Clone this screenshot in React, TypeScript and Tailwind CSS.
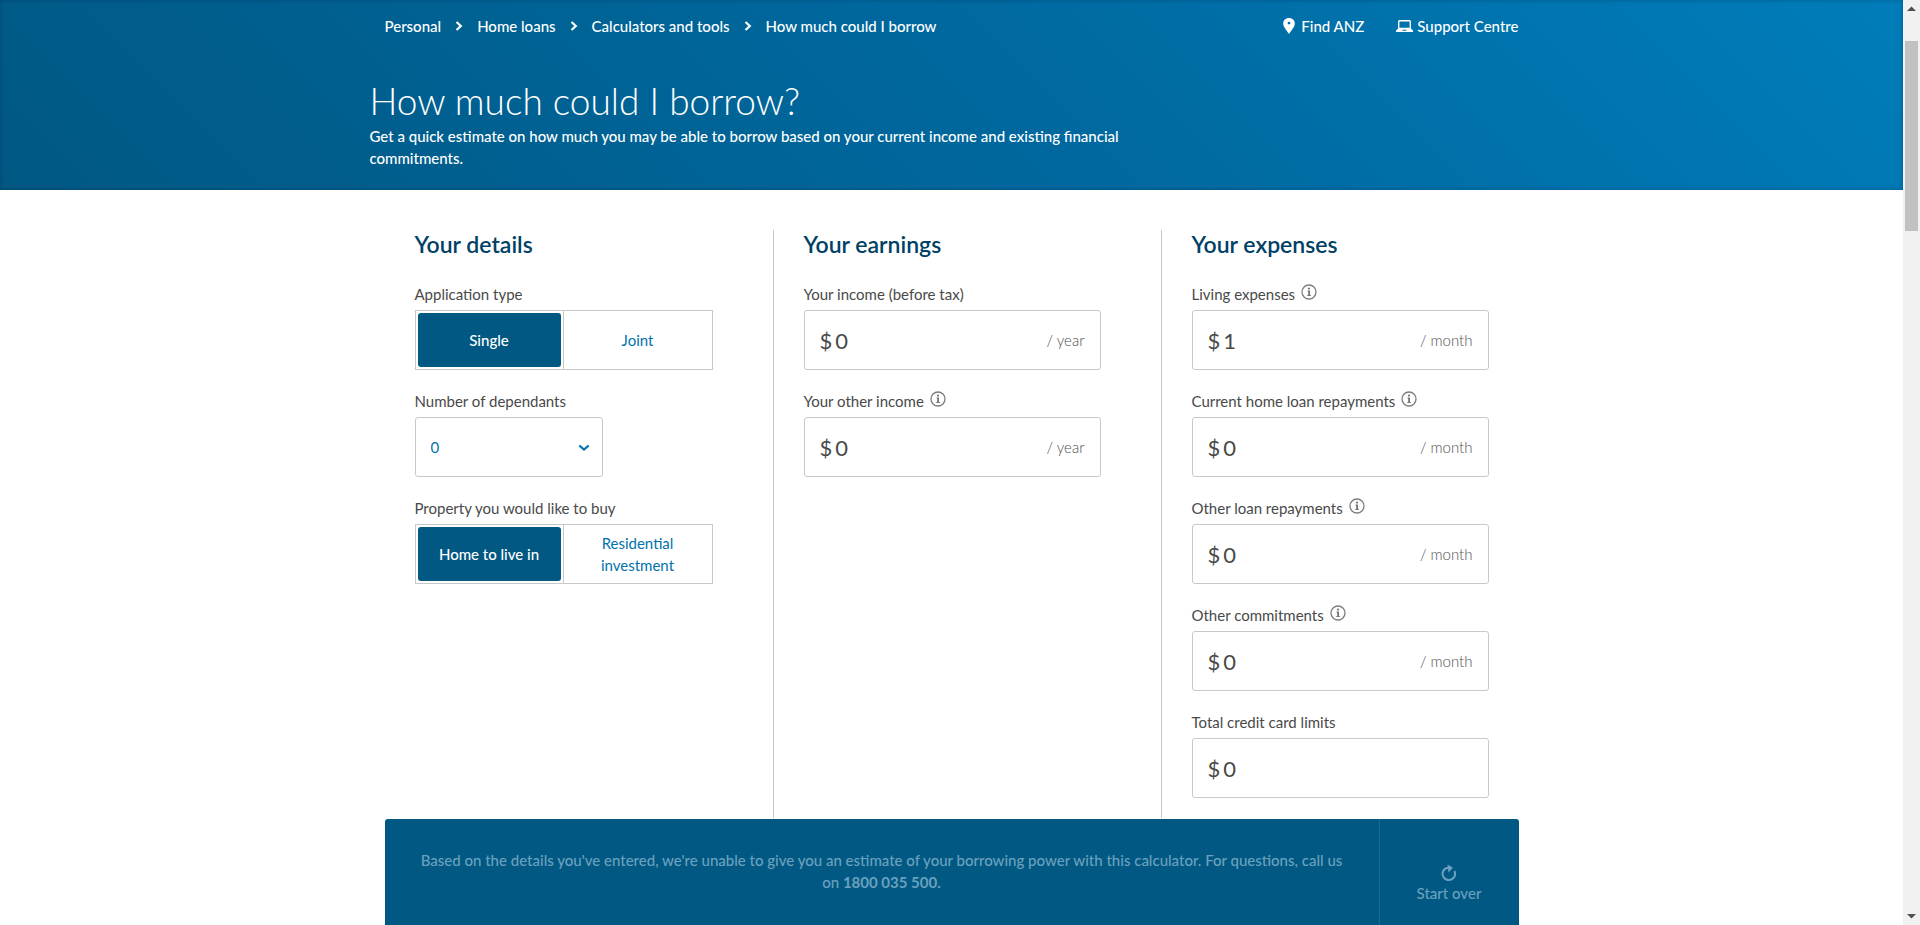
import { Fragment, useState } from "react";

const crumbs = ["Personal", "Home loans", "Calculators and tools", "How much could I borrow"];

function CrumbArrow() {
  return (
    <svg width="8" height="10" viewBox="0 0 8 10" fill="none" stroke="#fff" strokeWidth="2.2" aria-hidden="true">
      <path d="M1.5 1 5.8 5 1.5 9" />
    </svg>
  );
}

function PinIcon() {
  return (
    <svg width="12" height="16" viewBox="0 0 12 16" fill="#fff" fillRule="evenodd" aria-hidden="true">
      <path d="M6 0C2.500 0 .2 2.400.2 5.500c0 3.400 3 6.100 5.800 10.500 2.800-4.400 5.800-7.100 5.800-10.500C11.800 2.400 9.500 0 6 0Zm0 3.700a1.400 1.400 0 1 1 0 2.800 1.400 1.400 0 0 1 0-2.800Z" />
    </svg>
  );
}

function LaptopIcon() {
  return (
    <svg width="17" height="12" viewBox="0 0 17 12" aria-hidden="true">
      <rect x="2.700" y=".7" width="11.600" height="7.800" rx=".8" fill="none" stroke="#fff" strokeWidth="1.400" />
      <path d="M2.200 8.600h12.600l2.200 2V12H0v-1.400l2.200-2Z" fill="#fff" />
      <path d="M6.500 10.300h4" stroke="#0070a8" strokeWidth="1" />
    </svg>
  );
}

function InfoIcon() {
  return (
    <svg width="16" height="16" viewBox="0 0 16 16" aria-hidden="true">
      <circle cx="8" cy="8" r="7" fill="none" stroke="#7d7d7d" strokeWidth="1.300" />
      <circle cx="8" cy="4.600" r="1.100" fill="#747474" />
      <path d="M6.500 6.600H9v4.500h.8v.9H6.300v-.9h.9V7.500h-.7Z" fill="#747474" />
    </svg>
  );
}

function RestartIcon() {
  return (
    <svg width="16" height="18" viewBox="0 0 16 18" fill="none" stroke="currentColor" aria-hidden="true">
      <path d="M3.800 4.900A6.300 6.300 0 1 0 13.500 7" strokeWidth="2.100" />
      <path d="M3.100 5.800C4.600 4 6.500 3.500 9 4" strokeWidth="2" />
      <path d="M6.500.5 12 3.800 7.500 8.500Z" fill="currentColor" stroke="none" />
    </svg>
  );
}

function Toggle({ legend, options }: { legend: string; options: string[] }) {
  const [active, setActive] = useState(0);
  return (
    <fieldset className="min-w-0">
      <legend className="h-6 text-[15px] leading-4">{legend}</legend>
      <div className="grid min-h-[60px] grid-cols-2 divide-x divide-[#c9c9c9] border border-[#c9c9c9]">
        {options.map((option, i) => (
          <div key={option} className="flex p-[2px]">
            <button
              type="button"
              aria-pressed={i === active}
              onClick={() => setActive(i)}
              className={
                i === active
                  ? "flex-1 rounded-[3px] bg-[#005883] px-4 py-[5px] text-[15px] leading-[22px] font-medium text-white"
                  : "flex-1 rounded-[3px] px-4 py-[5px] text-[15px] leading-[22px] text-[#0072ac]"
              }
            >
              {option}
            </button>
          </div>
        ))}
      </div>
    </fieldset>
  );
}

type FieldProps = { id: string; label: string; value: string; unit?: string; info?: boolean };

function MoneyField({ id, label, value, unit, info }: FieldProps) {
  return (
    <div>
      <div className="flex h-6 gap-[6px]">
        <label htmlFor={id} className="text-[15px] leading-4">
          {label}
        </label>
        {info && (
          <button type="button" aria-label={`About ${label}`} className="-mt-[2px] h-4">
            <InfoIcon />
          </button>
        )}
      </div>
      <div className="flex h-[60px] items-center rounded-[3px] border border-[#c9c9c9] px-[15px]">
        <span className="text-[22px]">$</span>
        <input
          id={id}
          defaultValue={value}
          inputMode="numeric"
          className="ml-[3px] min-w-0 flex-1 bg-transparent text-[22px] outline-none"
        />
        {unit && <span className="text-[15px] font-light text-[#505050]">/ {unit}</span>}
      </div>
    </div>
  );
}

const columnTitle = "mb-[5px] text-[23px] leading-[28px] font-semibold text-[#004165]";

export default function App() {
  return (
    <div className="flex h-screen overflow-hidden bg-white font-['Lato','Open_Sans',sans-serif] text-[#494949]">
      <div className="min-w-0 flex-1 overflow-hidden">
        <header className="bg-linear-[45deg,#005883,#0069a0_55%,#007dba] pb-[21px] shadow-[inset_0_0_4px_rgba(0,30,70,0.35)]">
          <div className="mx-auto max-w-[1164px] text-white">
            <div className="flex items-center justify-between px-[15px] pt-[15px] text-[15px] leading-[22px] font-medium">
              <nav aria-label="Breadcrumb" className="flex items-center gap-[14px]">
                {crumbs.map((crumb, i) => (
                  <Fragment key={crumb}>
                    {i > 0 && <CrumbArrow />}
                    <a href="#">{crumb}</a>
                  </Fragment>
                ))}
              </nav>
              <nav aria-label="Help" className="flex gap-8">
                <a href="#" className="flex items-center gap-[6px]">
                  <PinIcon />
                  Find ANZ
                </a>
                <a href="#" className="flex items-center gap-1">
                  <LaptopIcon />
                  Support Centre
                </a>
              </nav>
            </div>
            <h1 className="mt-10 text-[37px] leading-[48px] font-light">How much could I borrow?</h1>
            <p className="max-w-[776px] text-[15px] leading-[22px] font-medium">
              Get a quick estimate on how much you may be able to borrow based on your current income and existing
              financial commitments.
            </p>
          </div>
        </header>

        <main className="mx-auto max-w-[1164px] px-[15px] pt-10">
          <div className="grid grid-cols-[minmax(0,389fr)_minmax(0,388fr)_minmax(0,357fr)]">
            <section className="flex flex-col gap-[23px] border-r border-[#c9c9c9] pr-[60px] pl-[30px]">
              <h2 className={columnTitle}>Your details</h2>
              <Toggle legend="Application type" options={["Single", "Joint"]} />
              <div>
                <label htmlFor="dependants" className="block h-6 text-[15px] leading-4">
                  Number of dependants
                </label>
                <div className="relative w-[188px]">
                  <select
                    id="dependants"
                    className="block h-[60px] w-full appearance-none rounded-[3px] border border-[#c9c9c9] bg-white px-[15px] text-[15px] text-[#0072ac]"
                  >
                    {["0", "1", "2", "3", "4", "5"].map((n) => (
                      <option key={n}>{n}</option>
                    ))}
                  </select>
                  <svg
                    className="pointer-events-none absolute top-[27px] right-[13px]"
                    width="12"
                    height="8"
                    viewBox="0 0 12 8"
                    fill="none"
                    stroke="#0072ac"
                    strokeWidth="2.200"
                    aria-hidden="true"
                  >
                    <path d="M1.300 1.500 6 5.500l4.700-4" />
                  </svg>
                </div>
              </div>
              <Toggle legend="Property you would like to buy" options={["Home to live in", "Residential investment"]} />
            </section>

            <section className="flex flex-col gap-[23px] border-r border-[#c9c9c9] pr-[60px] pl-[30px]">
              <h2 className={columnTitle}>Your earnings</h2>
              <MoneyField id="income" label="Your income (before tax)" value="0" unit="year" />
              <MoneyField id="other-income" label="Your other income" value="0" unit="year" info />
            </section>

            <section className="flex flex-col gap-[23px] px-[30px] pb-5">
              <h2 className={columnTitle}>Your expenses</h2>
              <MoneyField id="living" label="Living expenses" value="1" unit="month" info />
              <MoneyField id="home-loan" label="Current home loan repayments" value="0" unit="month" info />
              <MoneyField id="other-loan" label="Other loan repayments" value="0" unit="month" info />
              <MoneyField id="commitments" label="Other commitments" value="0" unit="month" info />
              <MoneyField id="cards" label="Total credit card limits" value="0" />
            </section>
          </div>

          <div className="mt-px flex h-40 rounded-[3px] bg-[#005883] text-[15px] leading-[22px] text-[#6ba1be]">
            <p className="flex-1 px-[30px] pt-[30px] text-center font-medium">
              Based on the details you've entered, we're unable to give you an estimate of your borrowing power with
              this calculator. For questions, call us on <strong className="font-bold">1800 035 500.</strong>
            </p>
            <button
              type="button"
              className="flex w-[140px] flex-col items-center border-l border-[#1a6a93] pt-[45px] font-medium"
            >
              <RestartIcon />
              Start over
            </button>
          </div>
        </main>
      </div>

      <div aria-hidden="true" className="flex w-[17px] shrink-0 flex-col items-center bg-[#f1f1f1]">
        <svg width="17" height="41" viewBox="0 0 17 41">
          <path d="M4 11h9L8.500 6.500Z" fill="#505050" />
        </svg>
        <div className="h-[190px] w-[13px] bg-[#c1c1c1]" />
        <svg className="mt-auto" width="17" height="17" viewBox="0 0 17 17">
          <path d="M4 6h9l-4.500 4.500Z" fill="#505050" />
        </svg>
      </div>
    </div>
  );
}
